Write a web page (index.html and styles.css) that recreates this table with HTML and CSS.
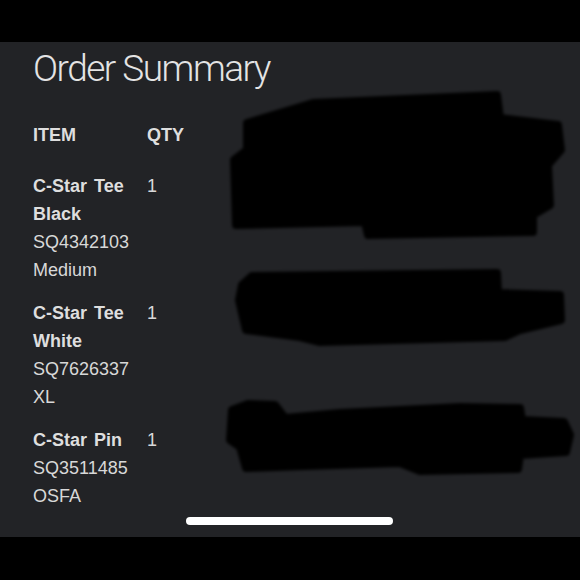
FILE: index.html
```html
<!DOCTYPE html>
<html lang="en">
<head>
    <meta charset="UTF-8">
    <meta name="viewport" content="width=device-width, initial-scale=1.0">
    <title>Order Summary</title>
    <link rel="stylesheet" href="styles.css">
</head>
<body>
    <div class="phone">
        <div class="top-bar"></div>

        <main class="sheet">
            <h1>Order Summary</h1>

            <div class="order">
                <div class="row head">
                    <div>ITEM</div>
                    <div>QTY</div>
                </div>

                <div class="row">
                    <div class="item">
                        <div class="name">C-Star Tee Black</div>
                        <div>SQ4342103</div>
                        <div>Medium</div>
                    </div>
                    <div class="qty">1</div>
                </div>

                <div class="row">
                    <div class="item">
                        <div class="name">C-Star Tee White</div>
                        <div>SQ7626337</div>
                        <div>XL</div>
                    </div>
                    <div class="qty">1</div>
                </div>

                <div class="row">
                    <div class="item">
                        <div class="name">C-Star Pin</div>
                        <div>SQ3511485</div>
                        <div>OSFA</div>
                    </div>
                    <div class="qty">1</div>
                </div>
            </div>

            <!-- redaction marks drawn over the price column -->
            <svg class="redact" width="580" height="495" viewBox="0 42 580 495">
                <defs>
                    <filter id="soft"><feGaussianBlur stdDeviation="1.8"/></filter>
                </defs>
                <g fill="#060606" stroke="#060606" stroke-width="8" stroke-linejoin="round" filter="url(#soft)">
                    <path d="M247 123 L313 103 L497 95 L500 118 L558 125 L561 150 L548 165 L550 205 L533 215 L533 232 L368 235 L365 222 L236 225 L234 160 L247 150 Z"/>
                    <path d="M252 276 L497 273 L498 293 L560 295 L561 320 L520 330 L505 337 L320 342 L300 337 L246 330 L239 300 L242 285 Z"/>
                    <path d="M232 410 L248 404 L275 405 L285 418 L340 413 L460 407 L520 408 L522 420 L564 422 L570 435 L566 452 L520 455 L518 469 L420 471 L400 463 L305 466 L246 468 L240 447 L230 440 Z"/>
                </g>
            </svg>

            <div class="home-bar"></div>
        </main>

        <div class="bottom-bar"></div>
    </div>
</body>
</html>
```

FILE: styles.css
```css
body {
    margin: 0;
    background-color: #000;
    font-family: "Liberation Sans", Arial, sans-serif;
}
.phone {
    width: 580px;
    height: 580px;
    display: flex;
    flex-direction: column;
}
.top-bar {
    height: 42px;
    background-color: #000;
}
.sheet {
    position: relative;
    height: 495px;
    background-color: #222326;
    padding-left: 33px;
    display: flex;
    flex-direction: column;
    box-sizing: border-box;
    padding-top: 5px;
}
h1 {
    margin: 0;
    font-family: Roboto, "Liberation Sans", sans-serif;
    font-weight: 300;
    font-size: 37px;
    line-height: 44px;
    color: #e4e4e4;
    letter-spacing: -1.5px;
}
.order {
    margin-top: 30px;
    font-size: 18px;
    line-height: 28px;
    color: #d8d8d8;
}
.row {
    display: grid;
    grid-template-columns: 114px 1fr;
}
.row.head {
    font-weight: bold;
    color: #dedede;
    margin-bottom: 23px;
}
.row + .row {
    margin-top: 15px;
}
.row.head + .row {
    margin-top: 0;
}
.name {
    font-weight: bold;
    color: #dedede;
    word-spacing: 2px;
}
.redact {
    position: absolute;
    top: 0;
    left: 0;
}
.home-bar {
    margin-top: auto;
    margin-bottom: 12px;
    margin-left: 153px;
    width: 207px;
    height: 8px;
    border-radius: 4px;
    background-color: #fff;
}
.bottom-bar {
    flex: 1;
    background-color: #000;
}
```
